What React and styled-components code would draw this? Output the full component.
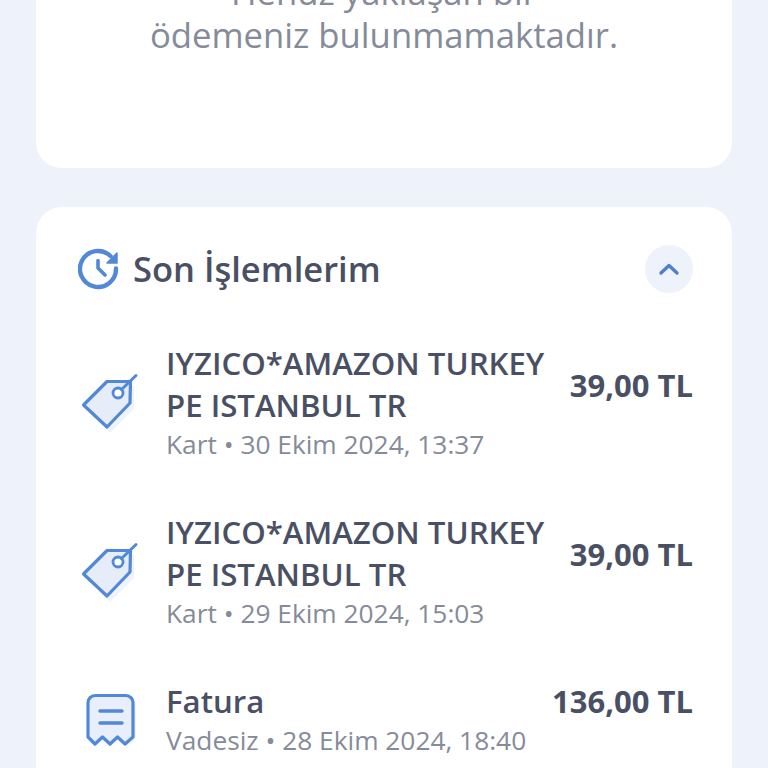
import React from "react";
import styled, { createGlobalStyle } from "styled-components";

const Global = createGlobalStyle`
  html, body { margin: 0; padding: 0; background: #eef2fb; }
  body { font-family: "Open Sans", "Noto Sans", sans-serif; }
`;

const Page = styled.div`
  width: 768px;
  height: 768px;
  overflow: hidden;
  background: #eef2fb;
  padding: 0 36px;
  box-sizing: border-box;
`;

const EmptyCard = styled.section`
  margin-top: -30px;
  height: 198px;
  background: #fff;
  border-radius: 0 0 26px 26px;
  display: flex;
  flex-direction: column;
  align-items: center;
`;

const EmptyText = styled.p`
  margin: 0;
  font-size: 34.7px;
  line-height: 43px;
  color: #858b99;
  text-align: center;
`;

const Card = styled.section`
  margin-top: 39px;
  background: #fff;
  border-radius: 26px 26px 0 0;
  padding: 38px 39px 0 42px;
  height: 700px;
`;

const Header = styled.header`
  display: flex;
  align-items: center;
  height: 48px;
`;

const Title = styled.h2`
  margin: -2px 0 0 13px;
  flex: 1;
  font-size: 34.5px;
  font-weight: 600;
  color: #4a5064;
`;

const Toggle = styled.button`
  width: 48px;
  height: 48px;
  padding: 0;
  border: 0;
  border-radius: 50%;
  background: #eef2fb;
  display: flex;
  align-items: center;
  justify-content: center;
`;

const List = styled.div`
  margin-top: 49px;
  display: flex;
  flex-direction: column;
`;

const Row = styled.div`
  display: flex;
  align-items: flex-start;
  min-height: ${(p) => p.$height}px;
`;

const IconSlot = styled.div`
  width: 88px;
  flex: none;
  margin-top: ${(p) => p.$top}px;
  display: flex;
  padding-left: ${(p) => p.$left}px;
  box-sizing: border-box;
`;

const Body = styled.div`
  flex: 1;
  min-width: 0;
`;

const Name = styled.div`
  font-size: 31.2px;
  line-height: 42px;
  font-weight: 600;
  color: #4a5064;
  white-space: nowrap;
`;

const Meta = styled.div`
  font-size: 26.3px;
  line-height: 36px;
  color: #858b99;
  white-space: nowrap;
`;

const Amount = styled.div`
  font-size: 31px;
  line-height: 42px;
  font-weight: 700;
  color: #4a5064;
  white-space: nowrap;
  margin-top: ${(p) => p.$top}px;
`;

const blue = "#5288d8";

const ClockIcon = () => (
  <svg width="42" height="42" viewBox="0 0 42 42" fill="none">
    <path d="M32.500 8A18 18 0 1 0 38 20.500" stroke={blue} strokeWidth="4.400" strokeLinecap="round" />
    <path d="M39 5v10H29z" fill={blue} stroke={blue} strokeWidth="1.500" strokeLinejoin="round" />
    <path d="M20 12.500V20l7 7" stroke={blue} strokeWidth="3.600" strokeLinecap="round" strokeLinejoin="round" />
  </svg>
);

const TagIcon = () => (
  <svg width="58" height="62" viewBox="0 0 58 62" fill="none">
    <path d="M6 36 30 13h23v23L29 60z" fill="#eaf0fb" opacity="0.8" />
    <path d="M2.500 32 26 8.500h23.500l-.5 21.500L26 54z" fill="#e6edf9" stroke={blue} strokeWidth="3.200" strokeLinejoin="round" />
    <circle cx="37" cy="20" r="5" fill="#fff" stroke={blue} strokeWidth="2.800" />
    <path d="M40.500 16.500 55 2.500" stroke={blue} strokeWidth="3" strokeLinecap="round" />
  </svg>
);

const ReceiptIcon = () => (
  <svg width="54" height="56" viewBox="0 0 54 56" fill="none">
    <path d="M8 6h36a7 7 0 0 1 7 7v33l-9 7-9-6-8 6-8-6-9 6z" fill="#eaf0fb" opacity="0.7" />
    <path d="M10 2.500h31a7 7 0 0 1 7 7V44l-8 7-7.500-7-7.500 7-7.500-7-7.500 7-7-7V9.500a7 7 0 0 1 7-7z" fill="#e8eefa" stroke={blue} strokeWidth="3.200" strokeLinejoin="round" />
    <path d="M15 18h22M15 30h22" stroke={blue} strokeWidth="3.400" strokeLinecap="round" />
  </svg>
);

const rows = [
  { name: <>IYZICO*AMAZON TURKEY<br />PE ISTANBUL TR</>, meta: "Kart • 30 Ekim 2024, 13:37", amount: "39,00 TL", Icon: TagIcon, iconTop: 31, iconLeft: 3, amountTop: 22, height: 169 },
  { name: <>IYZICO*AMAZON TURKEY<br />PE ISTANBUL TR</>, meta: "Kart • 29 Ekim 2024, 15:03", amount: "39,00 TL", Icon: TagIcon, iconTop: 31, iconLeft: 3, amountTop: 22, height: 169 },
  { name: "Fatura", meta: "Vadesiz • 28 Ekim 2024, 18:40", amount: "136,00 TL", Icon: ReceiptIcon, iconTop: 13, iconLeft: 7, amountTop: 0, height: 100 },
];

export default function App() {
  return (
    <Page>
      <Global />
      <EmptyCard>
        <EmptyText>Henüz yaklaşan bir<br />ödemeniz bulunmamaktadır.</EmptyText>
      </EmptyCard>
      <Card>
        <Header>
          <ClockIcon />
          <Title>Son İşlemlerim</Title>
          <Toggle aria-label="Daralt">
            <svg width="22" height="14" viewBox="0 0 22 14" fill="none">
              <path d="M3 11 11 3.500 19 11" stroke="#4f7fd0" strokeWidth="3.400" strokeLinecap="round" strokeLinejoin="round" />
            </svg>
          </Toggle>
        </Header>
        <List>
          {rows.map((r, i) => (
            <Row key={i} $height={r.height}>
              <IconSlot $top={r.iconTop} $left={r.iconLeft}><r.Icon /></IconSlot>
              <Body>
                <Name>{r.name}</Name>
                <Meta>{r.meta}</Meta>
              </Body>
              <Amount $top={r.amountTop}>{r.amount}</Amount>
            </Row>
          ))}
        </List>
      </Card>
    </Page>
  );
}
